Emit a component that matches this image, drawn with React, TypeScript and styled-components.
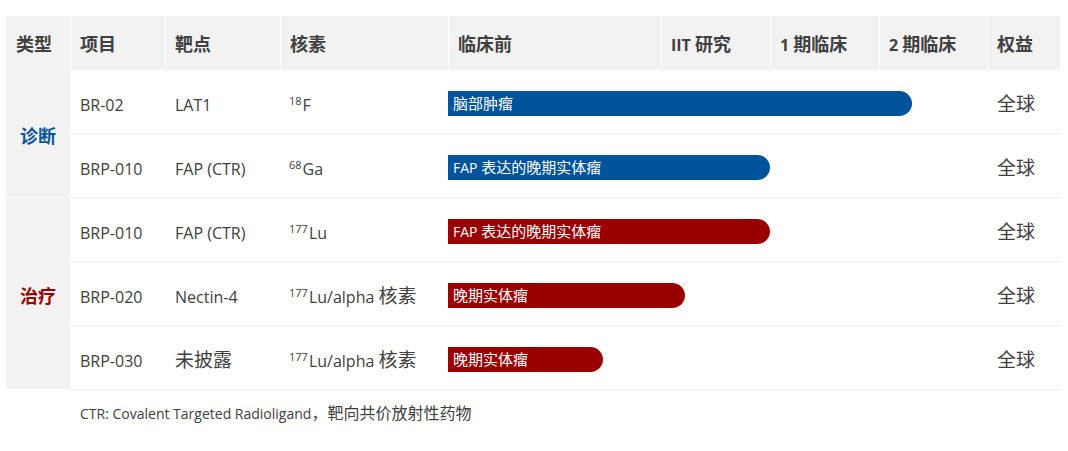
import styled, { createGlobalStyle } from "styled-components";

const GlobalStyle = createGlobalStyle`
  html, body { margin: 0; padding: 0; background: #fff; }
  body { font-family: "Open Sans", "Noto Sans CJK SC", sans-serif; color: #404040; }
`;

type Kind = "dx" | "tx";

interface Row {
  code: string;
  target: string;
  mass: string;
  element: string;
  indication: string;
  barWidth: number;
  kind: Kind;
}

const rows: Row[] = [
  { code: "BR-02", target: "LAT1", mass: "18", element: "F", indication: "脑部肿瘤", barWidth: 464, kind: "dx" },
  { code: "BRP-010", target: "FAP (CTR)", mass: "68", element: "Ga", indication: "FAP 表达的晚期实体瘤", barWidth: 322, kind: "dx" },
  { code: "BRP-010", target: "FAP (CTR)", mass: "177", element: "Lu", indication: "FAP 表达的晚期实体瘤", barWidth: 322, kind: "tx" },
  { code: "BRP-020", target: "Nectin-4", mass: "177", element: "Lu/alpha 核素", indication: "晚期实体瘤", barWidth: 237, kind: "tx" },
  { code: "BRP-030", target: "未披露", mass: "177", element: "Lu/alpha 核素", indication: "晚期实体瘤", barWidth: 155, kind: "tx" },
];

const colWidths = [64, 95, 115, 168, 213, 109, 109, 108, 73];
const heads = ["类型", "项目", "靶点", "核素", "临床前", "IIT 研究", "1 期临床", "2 期临床", "权益"];

const palette: Record<Kind, string> = { dx: "#01549b", tx: "#990000" };
const labelColor: Record<Kind, string> = { dx: "#0d5497", tx: "#990000" };

// split text into latin / CJK runs so the CJK glyphs get their own (larger) size
const HAN = /([\u3000-\u9fff\uff00-\uffef]+)/;
const mix = (text: string, Wrap: typeof Han) =>
  text.split(HAN).map((part, i) =>
    HAN.test(part) ? <Wrap key={i}>{part}</Wrap> : part
  );

export default function App() {
  return (
    <Page>
      <GlobalStyle />
      <Table>
        <colgroup>
          {colWidths.map((w, i) => <col key={i} style={{ width: w }} />)}
        </colgroup>
        <thead>
          <tr>
            {heads.map((h, i) => <HeadCell key={i} $first={i === 0}>{mix(h, HeadHan)}</HeadCell>)}
          </tr>
        </thead>
        <tbody>
          {rows.map((r, i) => (
            <tr key={i}>
              {i === 0 && <TypeCell rowSpan={2} $kind="dx">诊断</TypeCell>}
              {i === 2 && <TypeCell rowSpan={3} $kind="tx">治疗</TypeCell>}
              <Cell>{r.code}</Cell>
              <Cell>{mix(r.target, Han)}</Cell>
              <Cell $pl={9}>
                <Sup>{r.mass}</Sup>{mix(r.element, Han)}
              </Cell>
              <PhaseCell colSpan={4}>
                <Bar $kind={r.kind} style={{ width: r.barWidth }}>
                  {mix(r.indication, BarHan)}
                </Bar>
              </PhaseCell>
              <Cell><Han>全球</Han></Cell>
            </tr>
          ))}
        </tbody>
      </Table>
      <Note>
        {mix("CTR: Covalent Targeted Radioligand，靶向共价放射性药物", NoteHan)}
      </Note>
    </Page>
  );
}

const Page = styled.div`
  padding: 16px 8px 0 6px;
  width: 1054px;
`;

const Table = styled.table`
  width: 1054px;
  table-layout: fixed;
  border-collapse: separate;
  border-spacing: 0;
`;

const HeadCell = styled.th<{ $first?: boolean }>`
  box-sizing: border-box;
  height: 54px;
  padding: 2px 0 0 ${(p) => (p.$first ? 10 : 9)}px;
  background: #f2f2f2;
  border-left: ${(p) => (p.$first ? "none" : "1px solid #fff")};
  text-align: left;
  font-size: 16px;
  line-height: 20px;
  font-weight: 700;
  color: #404040;
  white-space: nowrap;
`;

const Han = styled.span`
  font-size: 19px;
  line-height: 1;
  font-family: "Noto Sans CJK SC", sans-serif;
`;

const HeadHan = styled(Han)`
  font-size: 18px;
  font-weight: 700;
`;

const BarHan = styled(Han)`
  font-size: 15px;
`;

const NoteHan = styled(Han)`
  font-size: 16px;
`;

const TypeCell = styled.td<{ $kind: Kind }>`
  background: #f2f2f2;
  border-bottom: 1px solid #fff;
  text-align: center;
  vertical-align: middle;
  font-family: "Noto Sans CJK SC", sans-serif;
  font-size: 18px;
  line-height: 20px;
  font-weight: 700;
  color: ${(p) => labelColor[p.$kind]};
  padding: 2px 0 0;
`;

const Cell = styled.td<{ $pl?: number }>`
  box-sizing: border-box;
  height: 64px;
  padding: 6px 0 0 ${(p) => p.$pl ?? 10}px;
  border-bottom: 1px solid #ededed;
  font-size: 16px;
  line-height: 22px;
  color: #404040;
  white-space: nowrap;
  vertical-align: middle;
`;

const PhaseCell = styled.td`
  box-sizing: border-box;
  height: 64px;
  padding: 3px 0 0;
  border-bottom: 1px solid #ededed;
  vertical-align: middle;
`;

const Sup = styled.sup`
  font-size: 11px;
  vertical-align: 6px;
  line-height: 0;
  margin-right: 1px;
`;

const Bar = styled.div<{ $kind: Kind }>`
  height: 25px;
  box-sizing: border-box;
  padding-left: 5px;
  background: ${(p) => palette[p.$kind]};
  border-radius: 0 13px 13px 0;
  color: #fff;
  font-size: 14px;
  line-height: 25px;
  white-space: nowrap;
  overflow: hidden;
`;

const Note = styled.div`
  padding: 14px 0 0 74px;
  font-size: 14px;
  line-height: 20px;
  color: #404040;
`;
